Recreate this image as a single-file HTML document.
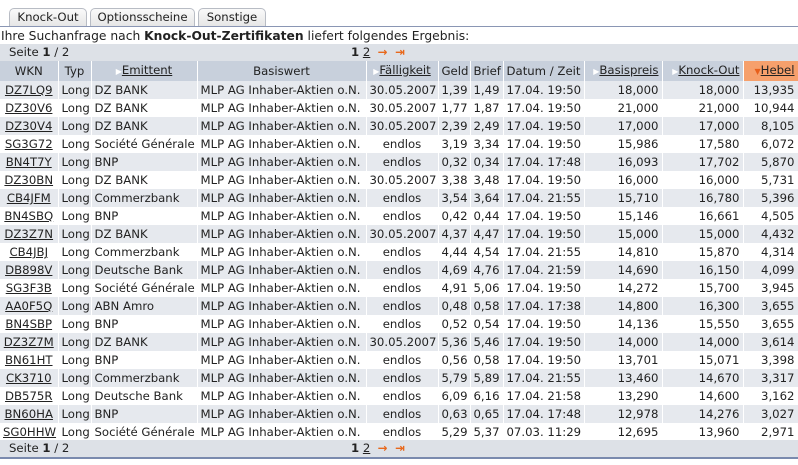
<!DOCTYPE html><html><head><style>
body{margin:0;background:#fff;font-family:"DejaVu Sans",Verdana,sans-serif;font-size:11.7px;color:#222;width:798px;height:465px;overflow:hidden;position:relative}
.tab{position:absolute;top:8px;height:17px;border:1px solid #b8bcc4;border-bottom:none;border-radius:5px 5px 0 0;background:linear-gradient(#fafafa,#e6e6e6);text-align:center;line-height:17px;font-size:11.7px}
.line{position:absolute;top:26px;left:0;width:798px;height:1px;background:#8a96b4}
.intro{position:absolute;top:28px;left:1px;font-size:12.3px;white-space:nowrap;line-height:16px}
.pager{position:absolute;left:0;width:798px;height:17px;background:#dde1e7;line-height:17px}
.pager .l{position:absolute;left:9px}
.pager .r{position:absolute;left:351px;}
.o{color:#e8681c;font-weight:bold}
table{position:absolute;top:61px;left:0;border-collapse:collapse;width:798px;table-layout:fixed}
td,th{padding:0 3px;height:18px;line-height:18px;white-space:nowrap;overflow:hidden;border-right:1px solid #fff;border-top:0;border-bottom:0}
th{background:#c8d0dc;font-weight:normal}
tr.g td{background:#e6e9ee}
td.r{text-align:right}
td.c{text-align:center}
u{text-decoration:underline}
.tri{color:#fff;font-size:8px}
th.h{background:#f6a06c}
.h .tri{color:#e8601c}
</style></head><body>
<div class="tab" style="left:9px;width:76px">Knock-Out</div>
<div class="tab" style="left:90px;width:103px">Optionsscheine</div>
<div class="tab" style="left:198px;width:66px">Sonstige</div>
<div class="line"></div>
<div class="intro">Ihre Suchanfrage nach <b>Knock-Out-Zertifikaten</b> liefert folgendes Ergebnis:</div>
<div class="pager" style="top:44px"><span class="l">Seite <b>1</b> / 2</span><span class="r"><b>1</b> <u>2</u> &nbsp;<span class="o">→</span> &nbsp;<span class="o">⇥</span></span></div>
<table>
<colgroup><col style="width:58px"><col style="width:33px"><col style="width:106px"><col style="width:169px"><col style="width:72px"><col style="width:32px"><col style="width:33px"><col style="width:81px"><col style="width:78px"><col style="width:81px"><col style="width:55px"></colgroup>
<tr><th>WKN</th><th>Typ</th><th><span class="tri">▶</span><u>Emittent</u></th><th>Basiswert</th><th><span class="tri">▶</span><u>Fälligkeit</u></th><th>Geld</th><th>Brief</th><th>Datum / Zeit</th><th style="text-align:right"><span class="tri">▶</span><u>Basispreis</u></th><th style="text-align:right"><span class="tri">▶</span><u>Knock-Out</u></th><th class="h" style="text-align:right"><span class="tri">▼</span><u>Hebel</u></th></tr>
<tr class="g"><td class="c"><u>DZ7LQ9</u></td><td>Long</td><td>DZ BANK</td><td>MLP AG Inhaber-Aktien o.N.</td><td>30.05.2007</td><td>1,39</td><td>1,49</td><td>17.04. 19:50</td><td class="r">18,000</td><td class="r">18,000</td><td class="r">13,935</td></tr>
<tr><td class="c"><u>DZ30V6</u></td><td>Long</td><td>DZ BANK</td><td>MLP AG Inhaber-Aktien o.N.</td><td>30.05.2007</td><td>1,77</td><td>1,87</td><td>17.04. 19:50</td><td class="r">21,000</td><td class="r">21,000</td><td class="r">10,944</td></tr>
<tr class="g"><td class="c"><u>DZ30V4</u></td><td>Long</td><td>DZ BANK</td><td>MLP AG Inhaber-Aktien o.N.</td><td>30.05.2007</td><td>2,39</td><td>2,49</td><td>17.04. 19:50</td><td class="r">17,000</td><td class="r">17,000</td><td class="r">8,105</td></tr>
<tr><td class="c"><u>SG3G72</u></td><td>Long</td><td>Société Générale</td><td>MLP AG Inhaber-Aktien o.N.</td><td class="c">endlos</td><td>3,19</td><td>3,34</td><td>17.04. 19:50</td><td class="r">15,986</td><td class="r">17,580</td><td class="r">6,072</td></tr>
<tr class="g"><td class="c"><u>BN4T7Y</u></td><td>Long</td><td>BNP</td><td>MLP AG Inhaber-Aktien o.N.</td><td class="c">endlos</td><td>0,32</td><td>0,34</td><td>17.04. 17:48</td><td class="r">16,093</td><td class="r">17,702</td><td class="r">5,870</td></tr>
<tr><td class="c"><u>DZ30BN</u></td><td>Long</td><td>DZ BANK</td><td>MLP AG Inhaber-Aktien o.N.</td><td>30.05.2007</td><td>3,38</td><td>3,48</td><td>17.04. 19:50</td><td class="r">16,000</td><td class="r">16,000</td><td class="r">5,731</td></tr>
<tr class="g"><td class="c"><u>CB4JFM</u></td><td>Long</td><td>Commerzbank</td><td>MLP AG Inhaber-Aktien o.N.</td><td class="c">endlos</td><td>3,54</td><td>3,64</td><td>17.04. 21:55</td><td class="r">15,710</td><td class="r">16,780</td><td class="r">5,396</td></tr>
<tr><td class="c"><u>BN4SBQ</u></td><td>Long</td><td>BNP</td><td>MLP AG Inhaber-Aktien o.N.</td><td class="c">endlos</td><td>0,42</td><td>0,44</td><td>17.04. 19:50</td><td class="r">15,146</td><td class="r">16,661</td><td class="r">4,505</td></tr>
<tr class="g"><td class="c"><u>DZ3Z7N</u></td><td>Long</td><td>DZ BANK</td><td>MLP AG Inhaber-Aktien o.N.</td><td>30.05.2007</td><td>4,37</td><td>4,47</td><td>17.04. 19:50</td><td class="r">15,000</td><td class="r">15,000</td><td class="r">4,432</td></tr>
<tr><td class="c"><u>CB4JBJ</u></td><td>Long</td><td>Commerzbank</td><td>MLP AG Inhaber-Aktien o.N.</td><td class="c">endlos</td><td>4,44</td><td>4,54</td><td>17.04. 21:55</td><td class="r">14,810</td><td class="r">15,870</td><td class="r">4,314</td></tr>
<tr class="g"><td class="c"><u>DB898V</u></td><td>Long</td><td>Deutsche Bank</td><td>MLP AG Inhaber-Aktien o.N.</td><td class="c">endlos</td><td>4,69</td><td>4,76</td><td>17.04. 21:59</td><td class="r">14,690</td><td class="r">16,150</td><td class="r">4,099</td></tr>
<tr><td class="c"><u>SG3F3B</u></td><td>Long</td><td>Société Générale</td><td>MLP AG Inhaber-Aktien o.N.</td><td class="c">endlos</td><td>4,91</td><td>5,06</td><td>17.04. 19:50</td><td class="r">14,272</td><td class="r">15,700</td><td class="r">3,945</td></tr>
<tr class="g"><td class="c"><u>AA0F5Q</u></td><td>Long</td><td>ABN Amro</td><td>MLP AG Inhaber-Aktien o.N.</td><td class="c">endlos</td><td>0,48</td><td>0,58</td><td>17.04. 17:38</td><td class="r">14,800</td><td class="r">16,300</td><td class="r">3,655</td></tr>
<tr><td class="c"><u>BN4SBP</u></td><td>Long</td><td>BNP</td><td>MLP AG Inhaber-Aktien o.N.</td><td class="c">endlos</td><td>0,52</td><td>0,54</td><td>17.04. 19:50</td><td class="r">14,136</td><td class="r">15,550</td><td class="r">3,655</td></tr>
<tr class="g"><td class="c"><u>DZ3Z7M</u></td><td>Long</td><td>DZ BANK</td><td>MLP AG Inhaber-Aktien o.N.</td><td>30.05.2007</td><td>5,36</td><td>5,46</td><td>17.04. 19:50</td><td class="r">14,000</td><td class="r">14,000</td><td class="r">3,614</td></tr>
<tr><td class="c"><u>BN61HT</u></td><td>Long</td><td>BNP</td><td>MLP AG Inhaber-Aktien o.N.</td><td class="c">endlos</td><td>0,56</td><td>0,58</td><td>17.04. 19:50</td><td class="r">13,701</td><td class="r">15,071</td><td class="r">3,398</td></tr>
<tr class="g"><td class="c"><u>CK3710</u></td><td>Long</td><td>Commerzbank</td><td>MLP AG Inhaber-Aktien o.N.</td><td class="c">endlos</td><td>5,79</td><td>5,89</td><td>17.04. 21:55</td><td class="r">13,460</td><td class="r">14,670</td><td class="r">3,317</td></tr>
<tr><td class="c"><u>DB575R</u></td><td>Long</td><td>Deutsche Bank</td><td>MLP AG Inhaber-Aktien o.N.</td><td class="c">endlos</td><td>6,09</td><td>6,16</td><td>17.04. 21:58</td><td class="r">13,290</td><td class="r">14,600</td><td class="r">3,162</td></tr>
<tr class="g"><td class="c"><u>BN60HA</u></td><td>Long</td><td>BNP</td><td>MLP AG Inhaber-Aktien o.N.</td><td class="c">endlos</td><td>0,63</td><td>0,65</td><td>17.04. 17:48</td><td class="r">12,978</td><td class="r">14,276</td><td class="r">3,027</td></tr>
<tr><td class="c"><u>SG0HHW</u></td><td>Long</td><td>Société Générale</td><td>MLP AG Inhaber-Aktien o.N.</td><td class="c">endlos</td><td>5,29</td><td>5,37</td><td>07.03. 11:29</td><td class="r">12,695</td><td class="r">13,960</td><td class="r">2,971</td></tr>
</table>
<div class="pager" style="top:440px"><span class="l">Seite <b>1</b> / 2</span><span class="r"><b>1</b> <u>2</u> &nbsp;<span class="o">→</span> &nbsp;<span class="o">⇥</span></span></div>
<div style="position:absolute;top:457px;left:0;width:798px;height:2px;background:#7a8aae"></div>
</body></html>
